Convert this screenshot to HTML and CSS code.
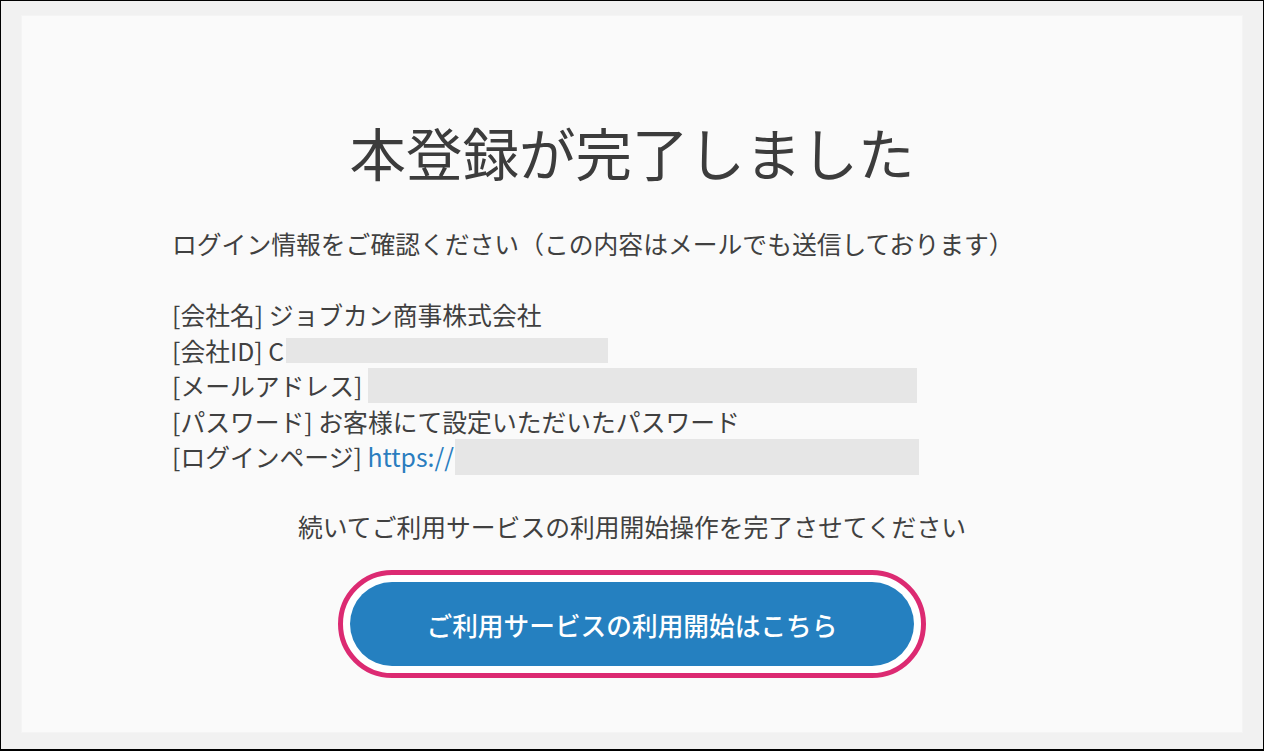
FILE: index.html
```html
<!DOCTYPE html>
<html lang="ja">
<head>
<meta charset="utf-8">
<title>本登録が完了しました</title>
<link rel="stylesheet" href="styles.css">
</head>
<body>
<div class="frame">
  <main class="card">
    <h1 class="title">本登録が完了しました</h1>
    <div class="info">
      <p class="line">ログイン情報をご確認ください（この内容はメールでも送信しております）</p>
      <p class="line blank">&nbsp;</p>
      <p class="line">[会社名] ジョブカン商事株式会社</p>
      <p class="line">[会社ID] C<span class="mask mask-id"></span></p>
      <p class="line">[メールアドレス] <span class="mask mask-mail"></span></p>
      <p class="line">[パスワード] お客様にて設定いただいたパスワード</p>
      <p class="line">[ログインページ] <a class="link" href="#">https://</a><span class="mask mask-url"></span></p>
    </div>
    <p class="next">続いてご利用サービスの利用開始操作を完了させてください</p>
    <div class="cta">
      <span class="ring"><a class="btn" href="#">ご利用サービスの利用開始はこちら</a></span>
    </div>
  </main>
</div>
</body>
</html>
```

FILE: styles.css
```css
* { box-sizing: border-box; }
html, body { margin: 0; padding: 0; }
body {
  font-family: "Noto Sans CJK JP", "Noto Sans", sans-serif;
  color: #404040;
  background: #f1f1f1;
}
.frame {
  width: 1264px;
  height: 751px;
  border: 1px solid #000;
  border-bottom-width: 2px;
  background: #f1f1f1;
  padding: 14px 20px 16px 20px;
  display: flex;
}
.card {
  flex: 1;
  background: #fafafa;
  border: 1px solid #f4f4f4;
  padding-top: 95px;
  display: flex;
  flex-direction: column;
  align-items: center;
}
.title {
  margin: 0;
  font-size: 56.5px;
  line-height: 80px;
  font-weight: 400;
  color: #3c3c3c;
}
.info {
  width: 920px;
  margin-top: 35px;
  font-size: 24.8px;
  line-height: 35.5px;
}
.line { margin: 0; white-space: nowrap; height: 35.5px; }
.mask {
  display: inline-block;
  background: #e6e6e6;
  vertical-align: top;
}
.mask-id { width: 322px; height: 25px; margin-top: 5px; margin-left: 2px; }
.mask-mail { width: 549px; height: 35px; }
.mask-url { width: 464px; height: 35.5px; margin-left: 1px; }
.link { color: #2a7dbf; text-decoration: none; }
.next {
  margin: 34px 0 0 0;
  font-size: 24.8px;
  line-height: 35.5px;
}
.cta { margin-top: 26px; }
.ring {
  display: inline-flex;
  border: 5px solid #dc2a72;
  border-radius: 999px;
  padding: 7px;
  background: #fff;
}
.btn {
  display: flex;
  align-items: center;
  justify-content: center;
  width: 564px;
  height: 84px;
  border-radius: 999px;
  background: #2580c0;
  color: #fff;
  font-size: 25.7px;
  font-weight: 500;
  text-decoration: none;
}
```
